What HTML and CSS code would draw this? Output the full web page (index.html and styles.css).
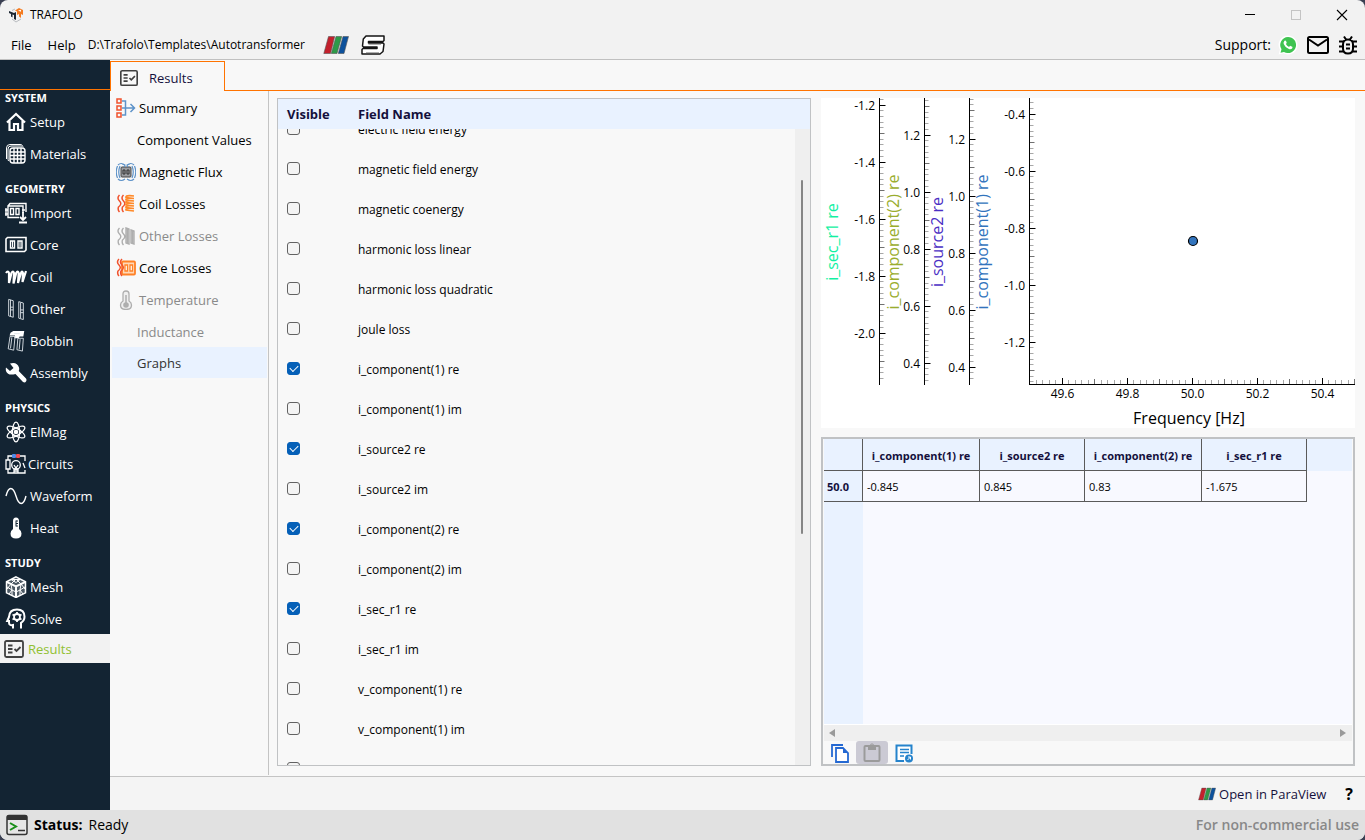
FILE: index.html
```html
<!DOCTYPE html>
<html lang="en">
<head>
<meta charset="utf-8">
<title>TRAFOLO</title>
<link rel="stylesheet" href="styles.css">
</head>
<body>
<svg class="defs" aria-hidden="true">
  <symbol id="i-results" viewBox="0 0 22 22"><rect x="2" y="3" width="18" height="16" rx="1.5" fill="none" stroke="currentColor" stroke-width="1.8"/><path d="M5 7.500h4.500M5 11h4.500M5 14.500h4.500" fill="none" stroke="currentColor" stroke-width="1.8"/><path d="M11.500 11l2 2L17.500 9" fill="none" stroke="currentColor" stroke-width="1.800"/></symbol>
  <symbol id="i-paraview" viewBox="0 0 26 18"><g stroke="#555" stroke-width=".6"><path d="M5.500.5h6.200L7.500 17.500H.8z" fill="#c3202c"/><path d="M13 .5h5.700L14 17.500H8.300z" fill="#2d9a48"/><path d="M20 .5h5.500L21 17.500H15.300z" fill="#0d519c"/></g></symbol>
</svg>

<header class="titlebar">
  <svg class="logo" viewBox="0 0 16 16"><path d="M7 3.500l4-2.500 4 2v5l-2-1v4l-2-1.500V7L9 8V4.500z" fill="#f47b20"/><path d="M10 3.500l3-.8v2z" fill="#fff"/><path d="M1 4l5 2 2-1v8l-2-1V8L4.500 7.500v3L3 9.500V7L1 6z" fill="#1c2733"/><path d="M4 3.500L7 2M4 12l4 3 5-3" fill="none" stroke="#b9bcc0"/></svg>
  <span class="app-name">TRAFOLO</span>
  <div class="window-buttons">
    <button type="button" aria-label="Minimize"><svg viewBox="0 0 12 12"><path d="M1 5.500h10" stroke="#000"/></svg></button>
    <button type="button" aria-label="Maximize" disabled><svg viewBox="0 0 12 12"><rect x="1.500" y="1.500" width="9" height="9" stroke="#c4c4c4" fill="none"/></svg></button>
    <button type="button" aria-label="Close"><svg viewBox="0 0 12 12"><path d="M1 1l10 10M11 1L1 11" stroke="#000" stroke-width="1.100"/></svg></button>
  </div>
</header>

<div class="menubar">
  <button type="button">File</button>
  <button type="button">Help</button>
  <span class="path">D:\Trafolo\Templates\Autotransformer</span>
  <button type="button" class="tool" aria-label="ParaView"><svg class="pv-large"><use href="#i-paraview"/></svg></button>
  <button type="button" class="tool" aria-label="Solver"><svg class="s-logo" viewBox="0 0 24 20"><path d="M5 1h18v4.500l-1 1H7.500v1.500H22l1 1-1 7.500-3 2.500H1v-4.500l1-1h14V12H2.500L1.500 11l.8-7z" fill="#fff" stroke="#151515" stroke-width="1.500" stroke-linejoin="round"/><path d="M7.500 9.500H20M5 17.500h13" stroke="#b0b0b0"/></svg></button>
  <div class="support">
    <span>Support:</span>
    <button type="button" aria-label="WhatsApp"><svg viewBox="0 0 20 20"><path d="M10 .5a9.500 9.500 0 1 1-4.600 17.800L.6 19.500l1.300-4.700A9.500 9.500 0 0 1 10 .5z" fill="#fff"/><path d="M10 2a8 8 0 1 1-4 14.900L2.500 17.800l1-3.500A8 8 0 0 1 10 2z" fill="#3fc351"/><path d="M6.500 5.800q1-.8 1.500.2l.7 1.600q0 .6-.8 1.300 1 2 3.200 3 .9-1.200 1.400-1l1.800.9q.5.500-.2 1.600-1.200 1.200-3.200.5Q7 12.500 5.700 9q-.5-1.800.8-3.200z" fill="#fff"/></svg></button>
    <button type="button" aria-label="Mail" class="mail"><svg viewBox="0 0 22 18"><rect x="1" y="1" width="20" height="16" rx="1.500" fill="none" stroke="#000" stroke-width="2"/><path d="M2 3.500l9 6 9-6" fill="none" stroke="#000" stroke-width="2"/></svg></button>
    <button type="button" aria-label="Report a bug"><svg viewBox="0 0 20 20"><path d="M10 4.500q5 0 5 5v4q0 5-5 5t-5-5v-4q0-5 5-5zM6 1.500l2 3M14 1.500l-2 3M1 6.500h4.500M1 11.500h4M1 16.500h4.500M14.500 6.500H19M15 11.500h4M14.500 16.500H19M8 9.500h4M8 13.500h4" fill="none" stroke="#000" stroke-width="2"/></svg></button>
  </div>
</div>

<div class="workspace">
  <nav class="sidebar" aria-label="Workflow">
    <div class="sidebar-top"></div>
    <h2>SYSTEM</h2>
    <button type="button"><svg viewBox="0 0 22 22"><path d="M2 11.500L11 3l9 8.500M4.500 10v9H9v-6h4v6h4.500v-9" fill="none" stroke="#fff" stroke-width="2.200"/></svg>Setup</button>
    <button type="button"><svg viewBox="0 0 22 22"><g fill="none" stroke="#fff"><rect x="5" y="5" width="15" height="15" rx="3" stroke-width="1.400"/><path d="M9 5v15M12.500 5v15M16 5v15M5 9h15M5 12.500h15M5 16h15" stroke-width="1.400"/><path d="M3.500 18Q3 17 3 15V6q0-3 3-3h10q2 0 2.500 1M1.500 16V5q0-3.500 3.500-3.500h10q2 0 2.500 1"/></g></svg>Materials</button>
    <h2>GEOMETRY</h2>
    <button type="button"><svg viewBox="0 0 22 22"><g fill="none" stroke="#fff" stroke-width="1.400"><path d="M14 15.500H3V4h15v7M5.500 6.500h3v6h-3zM11 6.500h3v6h-3zM3 4l2-2.500h16V10M1 6v8M0 8h3M0 12h3M17 8h3"/><path d="M18 10v8M15 15l3 3 3-3M14 20.500h8" stroke-width="1.800"/></g></svg>Import</button>
    <button type="button"><svg viewBox="0 0 22 22"><g fill="none" stroke="#fff"><path d="M1 5l1.500-1.500H21V16l-1.500 1.500H1z" stroke-width="1.600"/><path d="M5.500 7h4v7h-4zM13 7h4v7h-4z" stroke-width="1.400"/><path d="M7.500 7v6M15 7v6"/></g></svg>Core</button>
    <button type="button"><svg viewBox="0 0 22 22"><path d="M1 7q2-3 3 0L4 17l2.500-10Q8 4 9 7L8.500 17.500 11.200 7q1.500-3 2.500 0l-.7 10L16 7q1-3 2 0l-.5 9L21 5" fill="none" stroke="#fff" stroke-width="2.200"/></svg>Coil</button>
    <button type="button"><svg viewBox="0 0 22 24"><g fill="none" stroke="#dce3e8"><path d="M3 1.500l5 1.500v18l-5-1.500zM14 4l5 1.500v18L14 22z"/><path d="M5 2v18M16 5v17M5 10h3M5 13h3M16 13h3M16 16h3"/></g></svg>Other</button>
    <button type="button"><svg viewBox="0 0 22 24"><path d="M5 3l3-2h12l-1 6h-4l-1 2H9l1-3H4z" fill="#fff"/><path d="M4.500 7H10L8.500 22l-6-1.500zM13 9h6l-1 14-6-1.500zM6.500 8L5 20M15.500 10l-1 11M9 4h6" fill="none" stroke="#dce3e8"/></svg>Bobbin</button>
    <button type="button"><svg viewBox="0 0 22 22"><path d="M1 5.500L5 9l3.500-3L5 1.500q7-2 9 4 .5 2-.3 3.500L21 16.500q1 1.500 0 3t-3 .5l-7.500-8Q3 14 1.200 9.500.5 7.500 1 5.500z" fill="#fff"/></svg>Assembly</button>
    <h2>PHYSICS</h2>
    <button type="button"><svg viewBox="0 0 22 22"><g fill="none" stroke="#fff" stroke-width="1.200"><ellipse cx="11" cy="11" rx="3.600" ry="9.800"/><ellipse cx="11" cy="11" rx="3.600" ry="10" transform="rotate(60 11 11)"/><ellipse cx="11" cy="11" rx="3.600" ry="10" transform="rotate(120 11 11)"/><circle cx="11" cy="11" r="4.500" stroke-width=".8"/></g><circle cx="11" cy="11" r="2.300" fill="#fff"/></svg>ElMag</button>
    <button type="button" class="tight"><svg viewBox="0 0 22 22"><g fill="none" stroke="#fff" stroke-width="1.300"><path d="M7 3H3v4M15 3h5v5M3 16v4h17v-3M20 15l-2-5M1 7h4v9H1z"/><circle cx="11" cy="12" r="4.300"/><path d="M9 20v-4h4v4M9 12l2 3 2-3M9 18h4"/></g><rect x="7" y="1" width="4" height="4" rx="1" fill="#4f8be8"/><rect x="11" y="1" width="4" height="4" rx="1" fill="#ee4b52"/></svg>Circuits</button>
    <button type="button"><svg viewBox="0 0 22 22"><path d="M1 11C3.500 1 8 1 11 11s7.500 10 10 0" fill="none" stroke="#fff" stroke-width="1.400"/></svg>Waveform</button>
    <button type="button"><svg viewBox="0 0 22 22"><path d="M8 4q0-3.500 3-3.500T14 4v8q2.500 1.800 2.500 4.500 0 5-5.500 5t-5.500-5Q5.500 13.800 8 12z" fill="#fff"/><path d="M11 3.500v6M11 4h2M11 6.500h2M11 9h2" stroke="#132433"/></svg>Heat</button>
    <h2>STUDY</h2>
    <button type="button"><svg viewBox="0 0 22 22"><g fill="none" stroke="#fff" stroke-width="1.500"><path d="M11 .8l9.500 5v11L11 21.500l-9.500-4.700v-11z" fill="#ffffff40"/><path d="M1.500 5.800L11 10.500l9.500-4.700M11 10.500v11" stroke-width="2"/><path d="M6 3.500l5 3 4-3M6 8l5-5 5 5M6 3.500h9M2 13l4-5 1 6 4 2M2 11l5 3-3 4M7 14v5M20 13l-4-5-1 6-4 2M20 11l-5 3 3 4M15 14v5" stroke-width="1"/></g></svg>Mesh</button>
    <button type="button"><svg viewBox="0 0 22 22"><path d="M8 20.500V17q-4 .8-4-2.500V13H2.200L4 9q.3-7.500 8-7.500 7.500 0 7.500 7.300 0 4-3.500 6v5.700" fill="none" stroke="#fff" stroke-width="2"/><circle cx="12" cy="9" r="3" fill="none" stroke="#fff" stroke-width="1.800"/><path d="M12 4v2M12 12v2M7.500 6.500l2 1M14.500 10.500l2 1M7.500 11.500l2-1M14.500 7.500l2-1" stroke="#fff" stroke-width="1.800"/></svg>Solve</button>
    <button type="button" class="current" aria-current="page"><svg><use href="#i-results"/></svg><span>Results</span></button>
  </nav>

  <div class="main">
    <div class="tabs"><button type="button" class="tab"><svg><use href="#i-results"/></svg>Results</button><div class="tab-line"></div></div>
    <div class="page">
      <nav class="result-nav" aria-label="Results">
        <button type="button"><svg viewBox="0 0 20 20"><g fill="none" stroke="#f0522d" stroke-width="1.500"><rect x="1" y="1" width="4" height="4"/><rect x="1" y="8" width="4" height="4"/><rect x="1" y="15" width="4" height="4"/></g><path d="M6 3h3.500v14H6M6 10h12M14.500 6l4 4-4 4" fill="none" stroke="#5d92c8" stroke-width="1.500"/></svg>Summary</button>
        <button type="button" class="plain">Component Values</button>
        <button type="button"><svg viewBox="0 0 20 20"><rect x="5" y="5" width="10" height="10" rx="1" fill="#9a9ca0" stroke="#444"/><path d="M7 8h2v4H7zM11 8h2v4h-2z" fill="none" stroke="#333"/><path d="M4 16Q1.500 10 4 4M1.500 16Q-1 10 1.500 4M16 16q2.500-6 0-12M18.500 16q2.500-6 0-12M2 3q3-3 7 0M11 3q4-3 7 0M2 17q3 3 7 0M11 17q4 3 7 0M6 2l3 1-1 2M14 2l-3 1 1 2" fill="none" stroke="#5d92c8" stroke-width="1.200"/></svg>Magnetic Flux</button>
        <button type="button"><svg viewBox="0 0 20 20"><path d="M3.500 1q-3 3 0 6t-1 6q-1 3 1 5M7.500 1q-3 3 0 6t-1 6q-1 3 1 5" fill="none" stroke="#f0522d" stroke-width="1.500"/><path d="M18 2q-9-1-8 1.500l8 1q-9-1-8 1.500l8 1q-9-1-8 1.500l8 1q-9-1-8 1.500l8 1q-9-1-8 1.500l8 1q-9-1-8 1.500l8 1" fill="none" stroke="#ff8a2a" stroke-width="1.700"/></svg>Coil Losses</button>
        <button type="button" disabled><svg viewBox="0 0 20 20"><path d="M3.500 2q-3 3 0 6t-1 6q-1 3 1 5M7.500 2q-3 3 0 6t-1 6q-1 3 1 5M10 2l3 1v15l-3-1zM15 4l3 1v13l-3-1zM11.500 3v14M16.500 5v12" fill="none" stroke="#aeaeae" stroke-width="1.400"/></svg>Other Losses</button>
        <button type="button"><svg viewBox="0 0 20 20"><rect x="6" y="3.500" width="13" height="13" rx="1" fill="#ffd9b8" stroke="#ff8126" stroke-width="1.800"/><path d="M9 7h2.500v6H9zM14 7h2.500v6H14z" fill="#fff" stroke="#ff8126" stroke-width="1.300"/><path d="M3 1q-3 3 0 6t-1 6q-1 3 1 5M6 1q-3 3 0 6t-1 6q-1 3 1 5" fill="none" stroke="#f0522d" stroke-width="1.500"/></svg>Core Losses</button>
        <button type="button" disabled><svg viewBox="0 0 20 20"><path d="M7 4q0-3 3-3t3 3v7q2.500 1.500 2.500 4 0 4.500-5.500 4.500T4.500 15Q4.500 12.500 7 11z" fill="#efefef" stroke="#aeaeae" stroke-width="1.300"/><circle cx="10" cy="15" r="2.800" fill="#aeaeae"/><path d="M10 5v8" stroke="#aeaeae" stroke-width="1.500"/></svg>Temperature</button>
        <button type="button" class="plain" disabled>Inductance</button>
        <button type="button" class="plain selected">Graphs</button>
      </nav>

      <div class="content">
        <section class="fields" aria-label="Fields">
          <div class="fields-head"><span>Visible</span><span>Field Name</span></div>
          <div class="fields-scroll">
            <ul class="field-list">
              <li><input type="checkbox" id="f0"><label for="f0">electric field energy</label></li>
              <li><input type="checkbox" id="f1"><label for="f1">magnetic field energy</label></li>
              <li><input type="checkbox" id="f2"><label for="f2">magnetic coenergy</label></li>
              <li><input type="checkbox" id="f3"><label for="f3">harmonic loss linear</label></li>
              <li><input type="checkbox" id="f4"><label for="f4">harmonic loss quadratic</label></li>
              <li><input type="checkbox" id="f5"><label for="f5">joule loss</label></li>
              <li><input type="checkbox" id="f6" checked><label for="f6">i_component(1) re</label></li>
              <li><input type="checkbox" id="f7"><label for="f7">i_component(1) im</label></li>
              <li><input type="checkbox" id="f8" checked><label for="f8">i_source2 re</label></li>
              <li><input type="checkbox" id="f9"><label for="f9">i_source2 im</label></li>
              <li><input type="checkbox" id="f10" checked><label for="f10">i_component(2) re</label></li>
              <li><input type="checkbox" id="f11"><label for="f11">i_component(2) im</label></li>
              <li><input type="checkbox" id="f12" checked><label for="f12">i_sec_r1 re</label></li>
              <li><input type="checkbox" id="f13"><label for="f13">i_sec_r1 im</label></li>
              <li><input type="checkbox" id="f14"><label for="f14">v_component(1) re</label></li>
              <li><input type="checkbox" id="f15"><label for="f15">v_component(1) im</label></li>
              <li><input type="checkbox" id="f16" aria-label="Field"></li>
            </ul>
            <div class="track"><div class="thumb"></div></div>
          </div>
        </section>

        <div class="right">
          <svg class="chart" id="chart" viewBox="0 0 534 330" role="img" aria-label="Frequency plot">
            <text class="axis-title" x="368" y="326" text-anchor="middle">Frequency [Hz]</text>
          </svg>
          <section class="data">
            <div class="data-body">
              <table>
                <thead><tr><th class="idx"></th><th class="wide">i_component(1) re</th><th class="slim">i_source2 re</th><th class="wide">i_component(2) re</th><th class="slim">i_sec_r1 re</th></tr></thead>
                <tbody><tr><th class="idx">50.0</th><td>-0.845</td><td>0.845</td><td>0.83</td><td>-1.675</td></tr></tbody>
              </table>
            </div>
            <div class="hscroll"><svg viewBox="0 0 8 10"><path d="M7 1v8L1 5z" fill="#9a9a9a"/></svg><svg viewBox="0 0 8 10"><path d="M1 1v8l6-4z" fill="#9a9a9a"/></svg></div>
            <div class="data-tools">
              <button type="button" aria-label="Copy"><svg viewBox="0 0 20 20"><path d="M2 14V2h11" fill="none" stroke="#2468d2" stroke-width="1.800"/><path d="M6 5h7l5 5v9H6z" fill="#fff" stroke="#2468d2" stroke-width="1.800"/><path d="M13 5v5h5z" fill="#2468d2"/></svg></button>
              <button type="button" class="pressed" aria-label="Paste"><svg viewBox="0 0 20 20"><rect x="2.500" y="3" width="15" height="15" rx="1" fill="none" stroke="#9b9b9b" stroke-width="2"/><path d="M6 3h8v4H6z" fill="#9b9b9b"/><circle cx="10" cy="2.500" r="1.600" fill="none" stroke="#9b9b9b"/></svg></button>
              <button type="button" aria-label="Export"><svg viewBox="0 0 20 20"><path d="M10 18H2.500V2.500h15V11" fill="#fff" stroke="#2583cc" stroke-width="2"/><path d="M6 6.500h9M6 9.500h9M6 13h4" stroke="#2583cc" stroke-width="1.300"/><circle cx="15" cy="15.500" r="4" fill="#2583cc"/><path d="M13.500 17l3-3M14 14h2.500v2.500" fill="none" stroke="#fff"/></svg></button>
            </div>
          </section>
        </div>
      </div>
    </div>
    <div class="actions">
      <button type="button" class="open"><svg class="pv-small"><use href="#i-paraview"/></svg>Open in ParaView</button>
      <button type="button" class="help">?</button>
    </div>
  </div>
</div>

<footer class="status">
  <svg viewBox="0 0 22 22"><rect x="1" y="1.500" width="20" height="19" rx="2" fill="#e6e6e6" stroke="#333" stroke-width="1.500"/><path d="M1 6V3q0-2 2-2h16q2 0 2 2v3z" fill="#333"/><path d="M4 9l6 3.500L4 16" fill="none" stroke="#1a8f1a" stroke-width="2"/><path d="M12 16.500h7" stroke="#333" stroke-width="1.600"/></svg>
  <strong>Status:</strong><span>Ready</span>
  <span class="license">For non-commercial use</span>
</footer>
<script src="app.js"></script>
</body>
</html>
```
FILE: styles.css
```css
* { box-sizing: border-box; }
html { height: 100%; background: #3a3f52; }
body {
  margin: 0; height: 100vh; display: flex; flex-direction: column; overflow: hidden;
  background: #f2f2f2; border-radius: 8px; color: #000;
  font: 13px/18px "Open Sans", "Noto Sans", sans-serif;
}
button { font: inherit; color: inherit; background: none; border: 0; padding: 0; text-align: left; }
svg { display: block; flex: none; }
.defs { position: absolute; width: 0; height: 0; }

.titlebar { display: flex; flex: none; align-items: center; height: 29px; padding: 0 12px 0 8px; font-size: 12px; }
.logo { width: 16px; height: 16px; margin-right: 6px; }
.window-buttons { display: flex; gap: 34px; margin-left: auto; padding-right: 5px; }
.window-buttons svg { width: 12px; height: 12px; }

.menubar { display: flex; flex: none; align-items: center; height: 31px; padding: 1px 7px 0 11px; border-bottom: 1px solid #c0c0c0; }
.menubar > button { margin-right: 16px; }
.menubar .path { margin: 0 18px 0 -4px; font-size: 12px; }
.menubar .tool { margin-right: 12px; }
.pv-large { width: 26px; height: 18px; }
.s-logo { width: 24px; height: 20px; }
.support { display: flex; align-items: center; gap: 9px; margin-left: auto; font-size: 14px; }
.support span { margin-right: -2px; }
.support svg { width: 20px; height: 20px; }
.support .mail svg { width: 22px; height: 18px; }

.workspace { display: flex; flex: 1; min-height: 0; }
.sidebar { width: 110px; flex: none; background: #132433; color: #fff; display: flex; flex-direction: column; }
.sidebar > * { flex: none; }
.sidebar-top { height: 30px; border-bottom: 1px solid #ff7300; }
.sidebar h2 { margin: 11px 0 0; padding-left: 5px; font-size: 11px; line-height: 16px; font-weight: 700; }
.sidebar-top + h2 { margin-top: 0; }
.sidebar button { display: flex; align-items: center; gap: 3px; height: 32px; padding-left: 5px; }
.sidebar button.tight { gap: 1px; }
.sidebar svg { width: 22px; height: 22px; }
.sidebar .current { height: 29px; margin-top: -1px; padding-left: 3px; background: #f2f2f2; color: #404040; }
.sidebar .current span { color: #90c030; }

.main { flex: 1; min-width: 0; min-height: 0; display: flex; flex-direction: column; background: #f8f8f8; }
.tabs { display: flex; flex: none; height: 31px; padding-top: 1px; }
.tab { display: flex; align-items: center; gap: 10px; width: 115px; padding: 2px 0 0 8px; border: 1px solid #ff7300; border-bottom: 0; color: #14103c; }
.tab svg { width: 20px; height: 20px; color: #404040; }
.tab-line { flex: 1; border-bottom: 1px solid #ff7300; }
.page { flex: 1; min-height: 0; display: flex; }
.result-nav { width: 159px; flex: none; display: flex; flex-direction: column; padding: 1px 1px 0 2px; border-right: 1px solid #c4c4c4; margin-bottom: 1px; }
.result-nav button { display: flex; align-items: center; gap: 3px; height: 32px; padding-left: 4px; }
.result-nav svg { width: 20px; height: 20px; }
.result-nav button:disabled { color: #8a8a8a; }
.result-nav .plain { padding-left: 25px; }
.result-nav .selected { height: 31px; margin-top: -1px; background: #e9f2ff; color: #333; }

.content { flex: 1; min-width: 0; display: grid; grid-template-columns: minmax(0, 1fr) minmax(0, 1fr); grid-template-rows: minmax(0, 1fr); gap: 10px; padding: 7px 10px 10px 8px; }
.fields { display: flex; flex-direction: column; border: 1px solid #c0c2c4; font-size: 12px; }
.fields-head { display: grid; flex: none; grid-template-columns: 71px 1fr; align-items: center; height: 30px; padding-left: 9px; background: #e9f2ff; color: #14103c; font-size: 13px; font-weight: 700; }
.fields-scroll { flex: 1; min-height: 0; display: flex; overflow: hidden; }
.field-list { flex: 1; list-style: none; margin: -20px 0 0; padding: 0; }
.field-list li { display: grid; grid-template-columns: 71px 1fr; align-items: center; height: 40px; padding-left: 9px; }
.field-list label { padding-top: 1px; }
input[type="checkbox"] { appearance: none; width: 13px; height: 13px; margin: 0 0 2px; border: 1px solid #626262; border-radius: 3px; background: #f4f4f4; display: grid; place-items: center; }
input[type="checkbox"]:checked { background: #0560b8; border-color: #0560b8; }
input[type="checkbox"]:checked::after { content: ""; width: 7px; height: 4px; margin-bottom: 2px; border: solid #fff; border-width: 0 0 1px 1px; transform: rotate(-45deg); }
.track { width: 15px; background: #efefef; padding: 51px 0 0 6px; }
.thumb { width: 2px; height: 354px; border-radius: 1px; background: #858585; }

.right { display: flex; flex-direction: column; gap: 9px; }
.chart { width: 100%; height: auto; background: #fff; }
.chart text { font-size: 12px; }
.chart .axis-title { font-size: 16px; }
.chart .axis { stroke: #000; }
.chart .minor { stroke: #a8a8a8; }
.chart .mid { stroke: #707070; }

.data { flex: 1; display: flex; flex-direction: column; border: 2px solid #c0c2c4; padding: 0 1px; }
.data-body { flex: 1; background: linear-gradient(#e9f2ff, #e9f2ff) 0 0 / 100% 32px no-repeat, linear-gradient(#e9f2ff, #e9f2ff) 0 0 / 39px 100% no-repeat, #f8f9ff; border-bottom: 1px solid #fff; }
.data table { border-collapse: separate; border-spacing: 0; table-layout: fixed; width: 483px; font-size: 11px; }
.data th, .data td { height: 31px; padding: 1px 4px 0; border: solid #5a5a5a; border-width: 0 1px 1px 0; text-align: left; white-space: nowrap; }
.data th { color: #14103c; font-weight: 700; }
.data thead th { height: 32px; text-align: center; padding: 3px 0 0; }
.idx { width: 39px; }
.wide { width: 117px; }
.slim { width: 105px; }
.data tbody { background: #f8f9ff; }
.data tbody th { background: #e9f2ff; padding: 1px 3px 0; }
.hscroll { display: flex; justify-content: space-between; align-items: center; height: 16px; padding: 0 5px 0 4px; background: #efefef; }
.hscroll svg { width: 8px; height: 10px; }
.data-tools { display: flex; height: 23px; }
.data-tools button { display: flex; justify-content: center; align-items: center; width: 32px; border-radius: 3px; }
.data-tools svg { width: 20px; height: 20px; }
.data-tools .pressed { background: #cbcad4; }

.actions { display: flex; flex: none; justify-content: flex-end; align-items: center; gap: 19px; height: 34px; padding: 0 12px 0 0; border-top: 1px solid #c4c4c4; background: #f4f4f4; }
.open { display: flex; align-items: center; gap: 3px; color: #14103c; }
.pv-small { width: 18px; height: 14px; }
.help { font-size: 16px; font-weight: 700; }

.status { display: flex; flex: none; align-items: center; gap: 6px; height: 30px; padding: 0 6px; background: #e1e1e1; font-size: 14px; }
.status svg { width: 22px; height: 22px; }
.license { margin-left: auto; color: #888; font-weight: 600; }
```
FILE: app.js
```js
const NS = "http://www.w3.org/2000/svg";
const chart = document.getElementById("chart");

function add(name, attrs, text) {
  const el = document.createElementNS(NS, name);
  for (const key in attrs) el.setAttribute(key, attrs[key]);
  if (text) el.textContent = text;
  chart.appendChild(el);
}

const crisp = v => Math.floor(v) + 0.5;
const BOTTOM = 286;
const RIGHT = 534;
const STEP = 57;

// Vertical axes: x position, y and value of the first label, title and its baseline
const axes = [
  { x: 58, y: 7, value: -1.2, count: 5, title: "i_sec_r1 re", tx: 17, color: "#12f0a2" },
  { x: 103, y: 37, value: 1.2, count: 5, title: "i_component(2) re", tx: 78, color: "#9aad2e" },
  { x: 148, y: 41, value: 1.2, count: 5, title: "i_source2 re", tx: 122, color: "#4b2fc4" },
  { x: 208, y: 16, value: -0.4, count: 5, title: "i_component(1) re", tx: 167, color: "#3274bd" }
];

for (const a of axes) {
  const x = a.x + 0.5;
  for (let i = -10; i < 60; i++) {
    const y = crisp(a.y + (i * STEP) / 10);
    if (y < 0 || y > BOTTOM || (i >= 0 && i % 10 === 0)) continue;
    const mid = i % 5 === 0;
    add("line", { x1: x, x2: x + (mid ? 5 : 4), y1: y, y2: y, class: mid ? "mid" : "minor" });
  }
  for (let i = 0; i < a.count; i++) {
    const y = crisp(a.y + i * STEP);
    add("line", { x1: x, x2: x + 6, y1: y, y2: y, class: "axis" });
    add("text", { x: a.x - 4, y: y + 4, "text-anchor": "end" }, (a.value - i * 0.2).toFixed(1));
  }
  add("line", { x1: x, x2: x, y1: 0, y2: BOTTOM + 1, class: "axis" });
  add("text", { transform: `translate(${a.tx} 144) rotate(-90)`, "text-anchor": "middle", class: "axis-title", fill: a.color }, a.title);
}

// Frequency axis
for (let i = -4; i < 46; i++) {
  const x = crisp(241 + i * 6.5);
  const major = i % 10 === 0;
  const mid = i % 5 === 0;
  add("line", { x1: x, x2: x, y1: BOTTOM, y2: BOTTOM - (major ? 6 : mid ? 5 : 4), class: major ? "axis" : mid ? "mid" : "minor" });
  if (major) add("text", { x: x, y: BOTTOM + 14, "text-anchor": "middle" }, (49.6 + i * 0.02).toFixed(1));
}
add("line", { x1: 208, x2: RIGHT, y1: BOTTOM + 0.5, y2: BOTTOM + 0.5, class: "axis" });
add("circle", { cx: 372, cy: 143, r: 4.5, fill: "#3274bd", stroke: "#000", "stroke-width": 1.2 });
```
